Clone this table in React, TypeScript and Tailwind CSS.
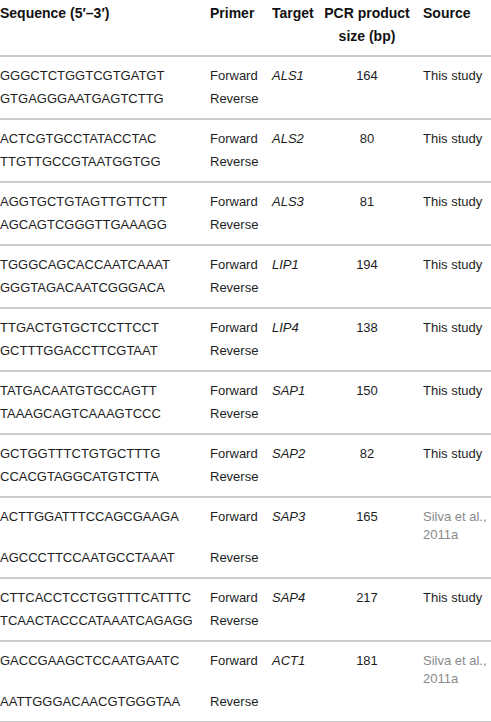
type PrimerRow = {
  forward: string;
  reverse: string;
  target: string;
  size: string;
  source: string;
  cited?: boolean;
};

const rows: PrimerRow[] = [
  { forward: "GGGCTCTGGTCGTGATGT", reverse: "GTGAGGGAATGAGTCTTG", target: "ALS1", size: "164", source: "This study" },
  { forward: "ACTCGTGCCTATACCTAC", reverse: "TTGTTGCCGTAATGGTGG", target: "ALS2", size: "80", source: "This study" },
  { forward: "AGGTGCTGTAGTTGTTCTT", reverse: "AGCAGTCGGGTTGAAAGG", target: "ALS3", size: "81", source: "This study" },
  { forward: "TGGGCAGCACCAATCAAAT", reverse: "GGGTAGACAATCGGGACA", target: "LIP1", size: "194", source: "This study" },
  { forward: "TTGACTGTGCTCCTTCCT", reverse: "GCTTTGGACCTTCGTAAT", target: "LIP4", size: "138", source: "This study" },
  { forward: "TATGACAATGTGCCAGTT", reverse: "TAAAGCAGTCAAAGTCCC", target: "SAP1", size: "150", source: "This study" },
  { forward: "GCTGGTTTCTGTGCTTTG", reverse: "CCACGTAGGCATGTCTTA", target: "SAP2", size: "82", source: "This study" },
  { forward: "ACTTGGATTTCCAGCGAAGA", reverse: "AGCCCTTCCAATGCCTAAAT", target: "SAP3", size: "165", source: "Silva et al., 2011a", cited: true },
  { forward: "CTTCACCTCCTGGTTTCATTTC", reverse: "TCAACTACCCATAAATCAGAGG", target: "SAP4", size: "217", source: "This study" },
  { forward: "GACCGAAGCTCCAATGAATC", reverse: "AATTGGGACAACGTGGGTAA", target: "ACT1", size: "181", source: "Silva et al., 2011a", cited: true },
];

const cols = "grid grid-cols-[210px_62px_53px_98px_1fr]";

export default function App() {
  return (
    <div
      className="w-[491px] bg-white text-[13px] text-[#1e1e1e]"
      style={{ fontFamily: '"Liberation Sans", Arial, sans-serif' }}
    >
      <div className={`${cols} border-b-2 border-[#cccccc] pt-[2px] pb-[7px] text-[14px] font-bold leading-[23px] text-[#111]`}>
        <div className="whitespace-nowrap">Sequence (5′–3′)</div>
        <div>Primer</div>
        <div>Target</div>
        <div className="flex flex-col items-center whitespace-nowrap pr-[14px]">
          <span>PCR product</span>
          <span>size (bp)</span>
        </div>
        <div>Source</div>
      </div>
      {rows.map((row) => (
        <div key={row.target} className="border-b-2 border-[#cccccc] pt-[7px] pb-[8px] leading-[18px]">
          <div className={`${cols} py-[2.5px]`}>
            <div>{row.forward}</div>
            <div>Forward</div>
            <div className="italic">{row.target}</div>
            <div className="pr-[14px] text-center">{row.size}</div>
            <div className={row.cited ? "text-[#8a8a8a]" : ""}>{row.source}</div>
          </div>
          <div className={`${cols} py-[2.5px]`}>
            <div>{row.reverse}</div>
            <div>Reverse</div>
          </div>
        </div>
      ))}
    </div>
  );
}
